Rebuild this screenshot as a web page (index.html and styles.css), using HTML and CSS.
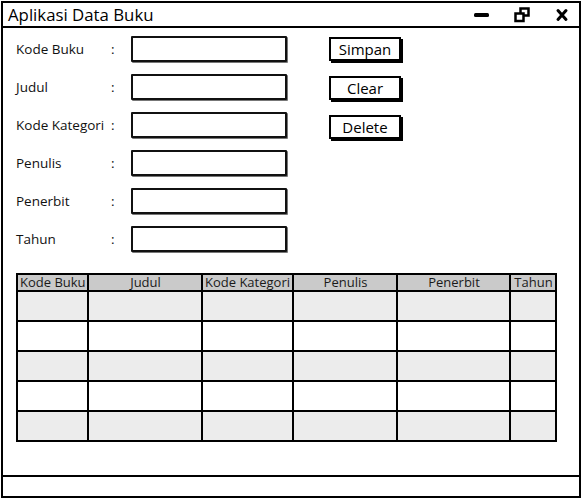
FILE: index.html
```html
<!DOCTYPE html>
<html>
<head>
<meta charset="utf-8">
<link rel="stylesheet" href="styles.css">
</head>
<body>
<div class="window">
  <div class="titlebar">
    <span class="title">Aplikasi Data Buku</span>
    <div class="controls">
      <svg class="ico" width="17" height="16" viewBox="0 0 17 16"><rect x="1" y="6" width="15" height="4" rx="1.5" fill="#000"/></svg>
      <svg class="ico" width="17" height="16" viewBox="0 0 17 16"><rect x="6.5" y="1.5" width="8" height="7" fill="none" stroke="#000" stroke-width="2.5"/><rect x="1.5" y="6.5" width="8" height="7.5" fill="#fff" stroke="#000" stroke-width="2.5"/></svg>
      <svg class="ico" width="14" height="16" viewBox="0 0 14 16"><path d="M3 3.5 L11 12.5 M11 3.5 L3 12.5" stroke="#000" stroke-width="3" stroke-linecap="round"/></svg>
    </div>
  </div>
  <div class="content">
    <div class="top">
      <div class="form">
        <span class="lbl">Kode Buku</span><span class="colon">:</span><div class="input"></div>
        <span class="lbl">Judul</span><span class="colon">:</span><div class="input"></div>
        <span class="lbl">Kode Kategori</span><span class="colon">:</span><div class="input"></div>
        <span class="lbl">Penulis</span><span class="colon">:</span><div class="input"></div>
        <span class="lbl">Penerbit</span><span class="colon">:</span><div class="input"></div>
        <span class="lbl">Tahun</span><span class="colon">:</span><div class="input"></div>
      </div>
      <div class="buttons">
        <div class="btn">Simpan</div>
        <div class="btn">Clear</div>
        <div class="btn">Delete</div>
      </div>
    </div>
    <table class="grid">
      <colgroup>
        <col class="c1"><col class="c2"><col class="c3"><col class="c4"><col class="c5"><col class="c6">
      </colgroup>
      <thead>
        <tr><th class="left">Kode Buku</th><th>Judul</th><th class="left">Kode Kategori</th><th>Penulis</th><th>Penerbit</th><th>Tahun</th></tr>
      </thead>
      <tbody>
        <tr class="odd"><td></td><td></td><td></td><td></td><td></td><td></td></tr>
        <tr><td></td><td></td><td></td><td></td><td></td><td></td></tr>
        <tr class="odd"><td></td><td></td><td></td><td></td><td></td><td></td></tr>
        <tr><td></td><td></td><td></td><td></td><td></td><td></td></tr>
        <tr class="odd"><td></td><td></td><td></td><td></td><td></td><td></td></tr>
      </tbody>
    </table>
  </div>
  <div class="statusbar"></div>
</div>
</body>
</html>
```
FILE: styles.css
```css
* { box-sizing: border-box; }
html, body { margin: 0; padding: 0; background: #fff; }
body {
  font-family: "Open Sans", "Liberation Sans", sans-serif;
  color: #000;
  width: 583px;
  height: 499px;
  overflow: hidden;
}
.window {
  margin: 1px 0 0 1px;
  width: 580px;
  height: 497px;
  border: 2px solid #000;
  display: flex;
  flex-direction: column;
}
.titlebar {
  height: 25px;
  border-bottom: 2px solid #000;
  display: flex;
  align-items: center;
  justify-content: space-between;
  padding: 0 10px 0 5px;
}
.title {
  font-size: 16.8px;
  line-height: 20px;
  padding-top: 1px;
}
.controls {
  display: flex;
  align-items: center;
  gap: 24px;
}
.ico { display: block; }
.content {
  flex: 1;
  padding: 8px 0 0 13px;
}
.top {
  display: flex;
  align-items: flex-start;
}
.form {
  display: grid;
  grid-template-columns: 95px 20px 156px;
  grid-auto-rows: 26px;
  row-gap: 12px;
  align-items: center;
}
.lbl, .colon {
  font-size: 13.5px;
  line-height: 16px;
  color: #111;
}
.input {
  height: 26px;
  border: 2px solid #111;
  border-radius: 1px;
  background: #fff;
  box-shadow: 1px 1px 0 #777;
}
.buttons {
  margin-left: 42px;
  margin-top: 1px;
  display: flex;
  flex-direction: column;
  gap: 15px;
}
.btn {
  width: 72px;
  height: 24px;
  border: 2px solid #000;
  box-shadow: 2px 2px 0 #000;
  font-size: 15px;
  line-height: 20px;
  text-align: center;
  background: #fff;
}
.grid {
  margin-top: 21px;
  width: 539px;
  border-collapse: collapse;
  border: 2px solid #000;
  table-layout: fixed;
}
.c1 { width: 71px; }
.c2 { width: 114px; }
.c3 { width: 91px; }
.c4 { width: 104px; }
.c5 { width: 113px; }
.c6 { width: 46px; }
.grid th {
  height: 17px;
  background: #cacaca;
  font-weight: normal;
  font-size: 13px;
  line-height: 15px;
  color: #1a1a1a;
  padding: 0 1px 0 2px;
  text-align: center;
  white-space: nowrap;
  overflow: hidden;
  border: 2px solid #000;
  border-top: 0;
  border-bottom: 2px solid #000;
}
.grid th.left { text-align: left; }
.grid td {
  height: 30px;
  border: 2px solid #000;
  padding: 0;
}
.grid tr.odd td { background: #ececec; }
.statusbar {
  height: 21px;
  border-top: 2px solid #000;
}
```
